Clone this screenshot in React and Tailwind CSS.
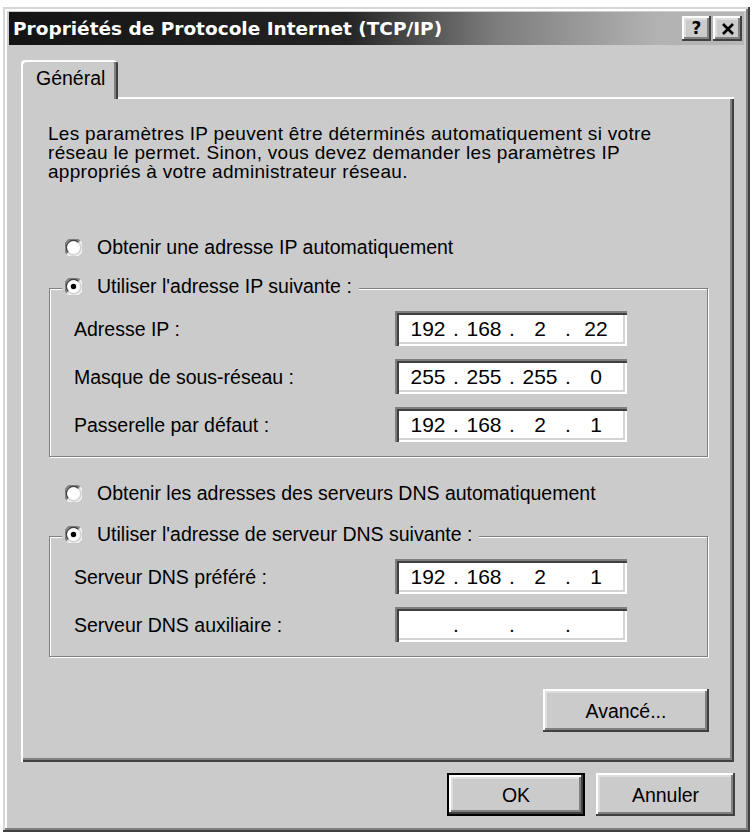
import React from 'react';

// Win2000-style "TCP/IP properties" dialog, greyscale

const raised =
  'shadow-[inset_-2px_-2px_0_#404040,inset_2px_2px_0_#ffffff,inset_-4px_-4px_0_#808080,inset_4px_4px_0_#dedede]';
const sunken =
  'shadow-[inset_2px_2px_0_#808080,inset_4px_4px_0_#404040,inset_-2px_-2px_0_#ffffff,inset_-4px_-4px_0_#d4d4d4]';

function Radio({ checked }) {
  return (
    <svg width="17" height="17" viewBox="0 0 17 17" className="shrink-0">
      <circle cx="8.5" cy="8.5" r="7.5" fill="#ffffff" />
      {/* sunken ring: dark top-left, light bottom-right */}
      <path d="M2.2 14.8 A7.5 7.5 0 0 1 14.8 2.2" fill="none" stroke="#808080" strokeWidth="1.6" />
      <path d="M3.4 13.6 A5.8 5.8 0 0 1 13.6 3.4" fill="none" stroke="#404040" strokeWidth="1.4" />
      <path d="M14.8 2.2 A7.5 7.5 0 0 1 2.2 14.8" fill="none" stroke="#f4f4f4" strokeWidth="1.6" />
      <path d="M13.6 3.4 A5.8 5.8 0 0 1 3.4 13.6" fill="none" stroke="#d4d4d4" strokeWidth="1.4" />
      {checked && <circle cx="8.5" cy="8.5" r="2.7" fill="#000000" />}
    </svg>
  );
}

function RadioRow({ checked, label }) {
  return (
    <div className="flex h-[20px] items-center gap-[15px]">
      <Radio checked={checked} />
      <span className="whitespace-nowrap">{label}</span>
    </div>
  );
}

function IpField({ parts }) {
  return (
    <div className={`flex h-[35px] w-[232px] items-center bg-white pl-[10px] text-[21px] ${sunken}`}>
      {parts.map((p, i) => (
        <React.Fragment key={i}>
          <span className="w-[46px] text-center">{p}</span>
          {i < 3 && <span className="w-[10px] text-center">.</span>}
        </React.Fragment>
      ))}
    </div>
  );
}

function Group({ label, rows, className }) {
  return (
    <fieldset
      className={`ml-[1px] w-[659px] border border-[#808080] p-0 shadow-[inset_1px_1px_0_#ffffff,1px_1px_0_#ffffff] ${className}`}
    >
      <legend className="ml-[12px] bg-[#cbcbcb] pl-[3px] pr-[7px] pb-[4px]">
        <RadioRow checked label={label} />
      </legend>
      <div className="grid grid-cols-[321px_232px] items-center gap-y-[13px] pb-[14px] pl-[24px] pt-[11px]">
        {rows.map((r) => (
          <React.Fragment key={r.label}>
            <span className="whitespace-nowrap">{r.label}</span>
            <IpField parts={r.parts} />
          </React.Fragment>
        ))}
      </div>
    </fieldset>
  );
}

function Button({ children, isDefault, className }) {
  return (
    <button
      className={`flex h-[43px] items-center justify-center bg-[#cbcbcb] text-[19.5px] ${raised} ${
        isDefault ? 'border-2 border-black' : ''
      } ${className}`}
    >
      {children}
    </button>
  );
}

function CaptionButton({ children }) {
  return (
    <div className={`flex h-[25px] w-[29px] items-center justify-center bg-[#cbcbcb] ${raised}`}>
      {children}
    </div>
  );
}

export default function App() {
  return (
    <div className="min-h-screen bg-white pl-[3px] pt-[7px] font-['Liberation_Sans',Arial,sans-serif] text-[19.5px] leading-[20px] text-black">
      <div className="flex h-[825px] w-[747px] flex-col bg-[#cbcbcb] px-[6px] pt-[5px] shadow-[inset_-2px_-2px_0_#404040,inset_2px_2px_0_#d6d6d6,inset_-4px_-4px_0_#808080,inset_4px_4px_0_#ffffff]">
        {/* Title bar */}
        <div className="flex h-[33px] shrink-0 items-center justify-between bg-[linear-gradient(to_right,#141414_0%,#242424_46%,#7c7c7c_66%,#b2b2b2_88%,#b6b6b6_100%)] pl-[4px] pr-[2px]">
          <span className="whitespace-nowrap font-['DejaVu_Sans',sans-serif] text-[18.5px] font-bold text-white">
            Propriétés de Protocole Internet (TCP/IP)
          </span>
          <div className="flex gap-[2px]">
            <CaptionButton>
              <span className="font-['DejaVu_Sans',sans-serif] text-[17px] font-bold leading-none">?</span>
            </CaptionButton>
            <CaptionButton>
              <svg width="14" height="12" viewBox="0 0 14 12">
                <path d="M2 1 L12 11 M12 1 L2 11" stroke="#000" strokeWidth="2.6" />
              </svg>
            </CaptionButton>
          </div>
        </div>

        <div className="flex flex-col pl-[12px] pt-[15px]">
          {/* Tab */}
          <div className="relative z-10 -mb-[2px] flex h-[39px] w-[97px] items-center rounded-t-[4px] bg-[#cbcbcb] pl-[15px] pb-[3px] shadow-[inset_2px_2px_0_#ffffff,inset_-2px_0_0_#404040,inset_-4px_0_0_#808080]">
            Général
          </div>

          {/* Panel */}
          <div className="flex h-[665px] w-[713px] flex-col pl-[27px] pt-[27px] shadow-[inset_2px_2px_0_#ffffff,inset_-2px_-2px_0_#404040,inset_-4px_-4px_0_#808080]">
            <p className="whitespace-nowrap text-[19px] leading-[19px] tracking-[0.3px]">
              Les paramètres IP peuvent être déterminés automatiquement si votre
              <br />
              réseau le permet. Sinon, vous devez demander les paramètres IP
              <br />
              appropriés à votre administrateur réseau.
            </p>

            <div className="ml-[17px] mt-[56px]">
              <RadioRow label="Obtenir une adresse IP automatiquement" />
            </div>

            <Group
              className="mt-[19px]"
              label="Utiliser l'adresse IP suivante :"
              rows={[
                { label: 'Adresse IP :', parts: ['192', '168', '2', '22'] },
                { label: 'Masque de sous-réseau :', parts: ['255', '255', '255', '0'] },
                { label: 'Passerelle par défaut :', parts: ['192', '168', '2', '1'] },
              ]}
            />

            <div className="ml-[17px] mt-[26px]">
              <RadioRow label="Obtenir les adresses des serveurs DNS automatiquement" />
            </div>

            <Group
              className="mt-[21px]"
              label="Utiliser l'adresse de serveur DNS suivante :"
              rows={[
                { label: 'Serveur DNS préféré :', parts: ['192', '168', '2', '1'] },
                { label: 'Serveur DNS auxiliaire :', parts: ['', '', '', ''] },
              ]}
            />

            <div className="mt-[32px] flex w-[661px] justify-end">
              <Button className="h-[42px] w-[166px]">Avancé...</Button>
            </div>
          </div>

          {/* Dialog buttons */}
          <div className="mt-[11px] flex w-[714px] justify-end gap-[11px]">
            <Button isDefault className="w-[138px]">
              OK
            </Button>
            <Button className="w-[139px]">Annuler</Button>
          </div>
        </div>
      </div>
    </div>
  );
}
